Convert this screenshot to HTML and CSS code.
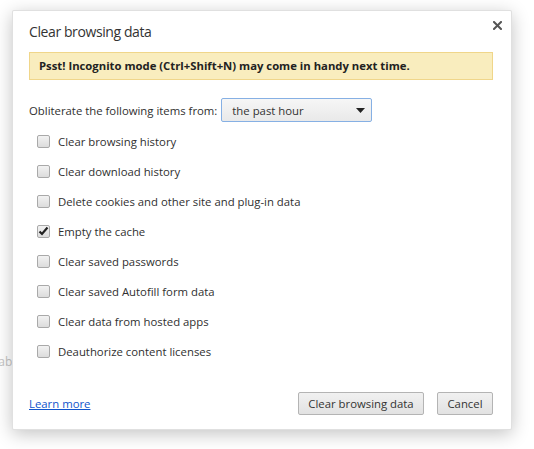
FILE: index.html
```html
<!DOCTYPE html>
<html>
<head>
<meta charset="utf-8">
<link rel="stylesheet" href="styles.css">
</head>
<body>
<span class="behind">tab</span>
<div class="dialog">
  <button class="close" aria-label="Close">
    <svg width="9" height="9" viewBox="0 0 9 9"><path d="M1 1L8 8M8 1L1 8" stroke="#555" stroke-width="2" stroke-linecap="square"/></svg>
  </button>
  <div class="title">Clear browsing data</div>
  <div class="banner">Psst! Incognito mode (Ctrl+Shift+N) may come in handy next time.</div>
  <div class="period">
    <span>Obliterate the following items from:</span>
    <div class="select">
      <span>the past hour</span>
      <svg width="9" height="5" viewBox="0 0 9 5"><path d="M0 0H9L4.5 5Z" fill="#222"/></svg>
    </div>
  </div>
  <ul class="items">
    <li><span class="box"></span>Clear browsing history</li>
    <li><span class="box"></span>Clear download history</li>
    <li><span class="box"></span>Delete cookies and other site and plug-in data</li>
    <li><span class="box checked"><svg width="11" height="10" viewBox="0 0 11 10"><path d="M1.5 5.5L4 8L9.5 1.5" fill="none" stroke="#222" stroke-width="2.2"/></svg></span>Empty the cache</li>
    <li><span class="box"></span>Clear saved passwords</li>
    <li><span class="box"></span>Clear saved Autofill form data</li>
    <li><span class="box"></span>Clear data from hosted apps</li>
    <li><span class="box"></span>Deauthorize content licenses</li>
  </ul>
  <div class="footer">
    <a class="learn" href="#">Learn more</a>
    <div class="buttons">
      <button class="btn btn-clear">Clear browsing data</button>
      <button class="btn btn-cancel">Cancel</button>
    </div>
  </div>
</div>
</body>
</html>
```
FILE: styles.css
```css
html, body {
  margin: 0;
  padding: 0;
  background: #ffffff;
}
body {
  width: 534px;
  height: 449px;
  overflow: hidden;
  position: relative;
  font-family: "Open Sans", "Noto Sans", sans-serif;
  font-size: 11.35px;
  color: #303030;
}
.behind {
  position: absolute;
  left: -6px;
  top: 353px;
  color: #c4c4c4;
  font-size: 12px;
}
.dialog {
  position: relative;
  box-sizing: border-box;
  margin: 10px 0 0 12px;
  width: 500px;
  height: 420px;
  background: #fff;
  border: 1px solid rgba(0,0,0,0.12);
  border-radius: 2px;
  box-shadow: 0 4px 18px rgba(0,0,0,0.24);
  padding: 0 18px 14px 16px;
  display: flex;
  flex-direction: column;
}
.close {
  position: absolute;
  top: 9px;
  right: 9px;
  width: 10px;
  height: 10px;
  padding: 0;
  border: 0;
  background: none;
  display: flex;
  align-items: center;
  justify-content: center;
}
.title {
  margin-top: 11px;
  font-size: 14px;
  line-height: 20px;
  color: #333;
  letter-spacing: -0.4px;
}
.banner {
  margin-top: 10px;
  height: 26px;
  line-height: 26px;
  background: #f9edbe;
  border: 1px solid #f0d68a;
  padding-left: 9px;
  font-weight: 700;
  font-size: 11.3px;
  color: #222;
}
.period {
  margin-top: 18px;
  display: flex;
  align-items: center;
  height: 24px;
}
.select {
  margin-left: 4px;
  box-sizing: border-box;
  width: 151px;
  height: 24px;
  border: 1px solid #86b0e4;
  border-radius: 2px;
  background: linear-gradient(#f6f6f6, #e9e9e9);
  padding: 0 6px 0 10px;
  display: flex;
  align-items: center;
  justify-content: space-between;
  color: #333;
}
.items {
  list-style: none;
  margin: 4px 0 0 0;
  padding: 0;
}
.items li {
  height: 30px;
  display: flex;
  align-items: center;
}
.box {
  box-sizing: border-box;
  width: 13px;
  height: 13px;
  margin-left: 8px;
  margin-right: 8px;
  border: 1px solid #a9a9a9;
  border-radius: 2px;
  background: linear-gradient(#f2f2f2, #dcdcdc);
  display: flex;
  align-items: center;
  justify-content: center;
}
.box svg {
  margin-top: -1px;
}
.footer {
  margin-top: auto;
  display: flex;
  align-items: center;
  justify-content: space-between;
}
.learn {
  color: #1155cc;
  text-decoration: underline;
}
.buttons {
  display: flex;
  gap: 13px;
}
.btn {
  box-sizing: border-box;
  height: 23px;
  border: 1px solid #b4b4b4;
  border-radius: 2px;
  background: linear-gradient(#f1f1f1, #e2e2e2);
  font-family: "Open Sans", "Noto Sans", sans-serif;
  font-size: 11.35px;
  color: #333;
  padding: 0;
}
.btn-clear { width: 126px; }
.btn-cancel { width: 56px; }
```
